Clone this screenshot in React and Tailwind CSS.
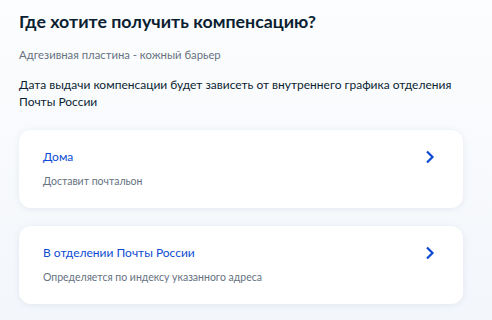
export default function App() {
  const Chevron = () => (
    <svg width="10" height="14" viewBox="0 0 10 14" fill="none">
      <path d="M2 1.5L7.5 7L2 12.5" stroke="#0d4cd3" strokeWidth="2.2" />
    </svg>
  );
  const Card = ({ title, sub }) => (
    <div className="flex flex-col rounded-[12px] bg-white pl-6 pr-[28px] pt-[18px] h-[78px] shadow-[0_1px_6px_rgba(100,120,160,0.12)]">
      <div className="flex items-center justify-between">
        <div className="text-[12px] leading-[18px] text-[#0d4cd3]">{title}</div>
        <Chevron />
      </div>
      <div className="mt-[7px] text-[10.5px] leading-[16px] text-[#66727f]">{sub}</div>
    </div>
  );
  return (
    <div className="w-[492px] h-[320px] overflow-hidden bg-gradient-to-b from-[#fcfdfe] to-[#f3f6fb] px-[19px] pt-[9px]" style={{ fontFamily: "Lato, 'Noto Sans', sans-serif" }}>
      <h1 className="text-[17.8px] leading-[24px] font-bold text-[#0b1f33]">Где хотите получить компенсацию?</h1>
      <p className="mt-[14px] text-[11.3px] leading-[16px] text-[#66727f]">Адгезивная пластина - кожный барьер</p>
      <p className="mt-[13px] text-[12px] leading-[17px] text-[#0b1f33]">Дата выдачи компенсации будет зависеть от внутреннего графика отделения Почты России</p>
      <div className="mt-[20px] flex flex-col gap-[18px] w-[444px]">
        <Card title="Дома" sub="Доставит почтальон" />
        <Card title="В отделении Почты России" sub="Определяется по индексу указанного адреса" />
      </div>
    </div>
  );
}
